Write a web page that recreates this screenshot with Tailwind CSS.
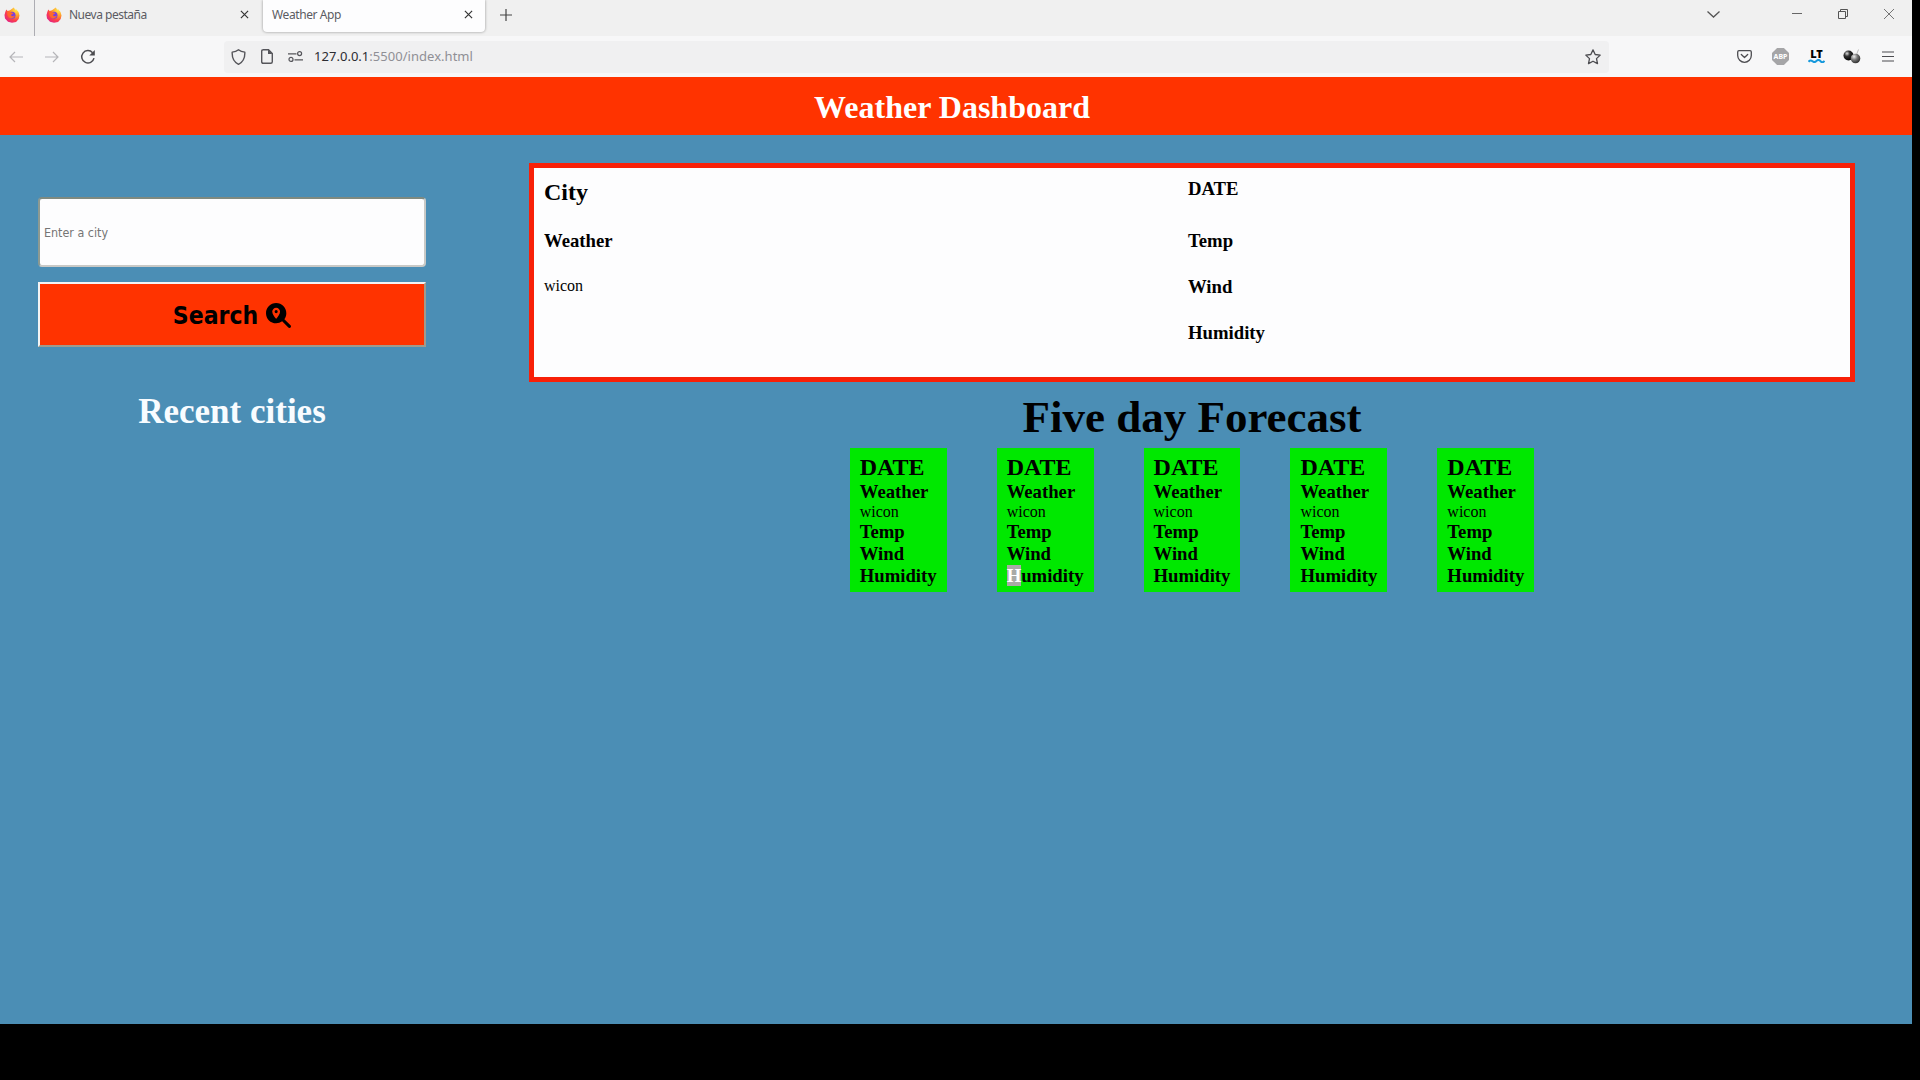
<!DOCTYPE html>
<html lang="es">
<head>
<meta charset="utf-8">
<title>Weather App</title>
<script src="https://cdn.jsdelivr.net/npm/@tailwindcss/browser@4"></script>
</head>
<body class="h-[1080px] w-[1920px] overflow-hidden bg-black">
<svg class="absolute h-0 w-0">
  <defs>
    <radialGradient id="flame" cx=".8" cy=".15" r="1"><stop offset="0" stop-color="#fff04a"/><stop offset=".4" stop-color="#ff9a2a"/><stop offset=".7" stop-color="#fb3f4c"/><stop offset="1" stop-color="#e0208a"/></radialGradient>
    <radialGradient id="dark" cx=".35" cy=".3" r=".7"><stop offset="0" stop-color="#ddd"/><stop offset=".4" stop-color="#333"/><stop offset="1" stop-color="#000"/></radialGradient>
    <radialGradient id="mid" cx=".35" cy=".3" r=".7"><stop offset="0" stop-color="#eee"/><stop offset=".5" stop-color="#777"/><stop offset="1" stop-color="#333"/></radialGradient>
    <symbol id="fox" viewBox="0 0 16 16">
      <path d="M1.200 5.200 2.300 2.600l1.300 1.500L6 3.200 9.800.6l1.400 2.200 1-.5 2.300 2.800 1 3.400-.8 3.600-2.600 2.800L8 15.800l-4-1L1 11.500.500 8z" fill="url(#flame)"/>
      <circle cx="8" cy="8.300" r="3.500" fill="#7a3fe0"/>
      <path d="M3.600 4.300c2-.3 3 .6 3.800 1.300l2 .3c-.4 1.200-2 1-2.400 2 .2 1.500 2.400 2 3.800.7-.4 2.200-2.700 3.300-4.700 2.600C3.600 10.300 3 7 3.600 4.300z" fill="#ff6a2a"/>
    </symbol>
  </defs>
</svg>
<div class="flex h-[1024px] w-[1912px] flex-col bg-[#4b8eb5]">
  <!-- Browser chrome -->
  <div class="flex h-[77px] shrink-0 flex-col bg-[#f7f7f8] font-['Noto_Sans','Open_Sans',sans-serif] text-[#5b5b62]">
    <div class="flex h-9 bg-[#f0f0f0]">
      <div class="flex h-[29px] w-[34px] items-center pl-1"><svg class="size-4"><use href="#fox"/></svg></div>
      <div class="h-9 w-px bg-[#adadb3]"></div>
      <div class="flex h-[29px] w-[228px] items-center pl-[11px] pr-[14px]">
        <svg class="size-4"><use href="#fox"/></svg>
        <span class="ml-[7px] flex-1 whitespace-nowrap text-[12px] tracking-[-0.5px]">Nueva pestaña</span>
        <svg class="size-[9px]" viewBox="0 0 10 10" fill="none" stroke="#333" stroke-width="1.300"><path d="M1 1l8 8M9 1L1 9"/></svg>
      </div>
      <div class="flex h-8 w-[222px] items-center rounded-b bg-[#fdfdfe] pb-[3px] pl-[9px] pr-3 shadow-[0_0_3px_rgba(0,0,0,0.4)]">
        <span class="flex-1 whitespace-nowrap text-[12px] tracking-[-0.4px]">Weather App</span>
        <svg class="size-[9px]" viewBox="0 0 10 10" fill="none" stroke="#333" stroke-width="1.300"><path d="M1 1l8 8M9 1L1 9"/></svg>
      </div>
      <div class="flex h-[29px] flex-1 items-center pl-[15px]">
        <svg class="size-3" viewBox="0 0 12 12" fill="none" stroke="#444" stroke-width="1.200"><path d="M6 0v12M0 6h12"/></svg>
      </div>
      <div class="flex h-7 items-center pr-[18px]">
        <svg class="mr-[72px] h-[7px] w-[13px]" viewBox="0 0 13 7" fill="none" stroke="#555" stroke-width="1.300"><path d="M.5.5l6 5.500 6-5.500"/></svg>
        <svg class="mr-[36px] h-[10px] w-[10px]" viewBox="0 0 10 10" stroke="#666"><path d="M0 4.500h10"/></svg>
        <svg class="mr-[36px] h-[10px] w-[10px]" viewBox="0 0 10 10" fill="none" stroke="#555"><path d="M.5 2.500h7v7h-7zM2.500 2.500v-2h7v7h-2"/></svg>
        <svg class="h-[10px] w-[10px]" viewBox="0 0 10 10" stroke="#666" stroke-width=".9"><path d="M0 0l10 10M10 0L0 10"/></svg>
      </div>
    </div>
    <div class="flex h-[41px] items-center">
      <svg class="ml-[9px] h-3 w-[14px]" viewBox="0 0 14 12" fill="none" stroke="#b5b5b9" stroke-width="1.200"><path d="M14 6H1M6 1L1 6l5 5"/></svg>
      <svg class="ml-[22px] h-3 w-[14px]" viewBox="0 0 14 12" fill="none" stroke="#b5b5b9" stroke-width="1.200"><path d="M0 6h13M8 1l5 5-5 5"/></svg>
      <svg class="ml-[21px] size-4" viewBox="0 0 16 16"><path d="M12.600 3.700A6.200 6.200 0 1 0 14 9.200" fill="none" stroke="#4c4c50" stroke-width="1.500"/><path d="M14.800 1v5.500H9.300z" fill="#4c4c50"/></svg>
      <div class="ml-[128px] flex h-8 w-[1385px] items-center rounded bg-[#f0f0f1]">
        <svg class="ml-[7px] h-4 w-[15px]" viewBox="0 0 15 16" fill="none" stroke="#55555a" stroke-width="1.400" stroke-linejoin="round"><path d="M7.500.8c2 1.600 4 2.100 6.300 2.300.3 5.600-1.200 9.800-6.300 12.200C2.400 12.900.9 8.700 1.200 3.100 3.500 2.900 5.500 2.400 7.500.8z"/></svg>
        <svg class="ml-[15px] h-[15px] w-3" viewBox="0 0 12 15"><path d="M2 .7h5.500l3.800 3.800v8.300q0 1.500-1.500 1.500H2.200q-1.500 0-1.500-1.500V2.200Q.7.7 2.200.7z" fill="none" stroke="#55555a" stroke-width="1.400"/><path d="M7 .5v4.500h4.500z" fill="#55555a"/></svg>
        <svg class="ml-[15px] h-[11px] w-[15px]" viewBox="0 0 15 11" fill="none" stroke="#55555a" stroke-width="1.200"><path d="M0 2.800h8.500M6.500 8.800H15"/><circle cx="11.600" cy="2.600" r="2"/><circle cx="3" cy="8.400" r="2"/></svg>
        <span class="ml-[11px] flex-1 whitespace-nowrap pt-px text-[13px] tracking-[0.03px] text-[#8f8f95]"><span class="text-[#2c2c32]">127.0.0.1</span>:5500/index.html</span>
        <svg class="mr-2 size-4" viewBox="0 0 16 16" fill="none" stroke="#4c4c50" stroke-width="1.300" stroke-linejoin="round"><path d="M8 .9l2.200 4.600 5 .6-3.700 3.500 1 5L8 12.200l-4.500 2.400 1-5L.8 6.100l5-.6z"/></svg>
      </div>
      <div class="ml-[128px] flex items-center">
        <svg class="h-[13px] w-[15px]" viewBox="0 0 15 13" fill="none" stroke="#4c4c50" stroke-width="1.300" stroke-linecap="round" stroke-linejoin="round"><path d="M2 .7h11q1.300 0 1.300 1.300v3.500a6.800 6.800 0 0 1-13.600 0V2Q.7.7 2 .7zM4.300 4.500l3.200 3 3.200-3"/></svg>
        <div class="ml-5 flex size-[17px] items-center justify-center bg-[#a5a5a7] text-[7px] font-bold leading-none text-white [clip-path:polygon(30%_0,70%_0,100%_30%,100%_70%,70%_100%,30%_100%,0_70%,0_30%)]">ABP</div>
        <div class="ml-[19px] flex h-[13px] w-[17px] flex-col items-center justify-between">
          <span class="h-[8px] font-['Noto_Sans',sans-serif] text-[11px] font-black leading-[8px] text-black">LT</span>
          <svg class="h-1 w-[17px]" viewBox="0 0 17 4" fill="none" stroke="#1598dc" stroke-width="2"><path d="M.5 2.800q2-2.200 4-.5t4-.4 4 .3 4-.4"/></svg>
        </div>
        <svg class="ml-[18px] h-4 w-[18px]" viewBox="0 0 18 16"><path d="M13 7L15.500.5" stroke="#bbb"/><circle cx="5.500" cy="6.500" r="5" fill="url(#dark)"/><circle cx="12.500" cy="9.500" r="4.800" fill="url(#mid)"/></svg>
        <svg class="ml-[21px] h-[11px] w-3" viewBox="0 0 12 11" stroke="#4c4c50" stroke-width="1.200"><path d="M0 1h12M0 5.500h12M0 10h12"/></svg>
      </div>
    </div>
  </div>

  <!-- Page -->
  <div class="flex flex-1 flex-col font-['Liberation_Serif',serif] text-base text-black">
    <header class="flex h-[58px] items-center justify-center bg-[#ff3300] pr-2 pt-px">
      <h1 class="text-[32px] font-bold leading-[36px] text-white">Weather Dashboard</h1>
    </header>
    <div class="flex flex-1">
      <aside class="ml-[38px] flex w-[388px] flex-col pt-[62px]">
        <div class="flex h-[70px] items-center rounded border-2 border-b-[#c9c9c6] border-l-[#8d9a92] border-r-[#c9c9c6] border-t-[#7f8a80] bg-[#fdfdfe] pl-1 pt-[2px] font-['DejaVu_Sans_Condensed','DejaVu_Sans',sans-serif] text-[12.400px] text-[#757575] [font-stretch:condensed]">Enter a city</div>
        <div class="mt-[15px] flex h-[65px] items-center justify-center border-2 border-b-[#a09a8c] border-l-[#f4f4f4] border-r-[#a09a8c] border-t-[#f4f4f4] bg-[#ff3300] pt-[2px]">
          <span class="font-['DejaVu_Sans_Condensed','DejaVu_Sans',sans-serif] text-[24.500px] font-bold leading-7 [font-stretch:condensed]">Search</span>
          <svg class="ml-2 size-[25px]" viewBox="0 0 512 512"><path fill-rule="evenodd" d="M416 208c0 45.900-14.900 88.300-40 122.700L502.600 457.400c12.500 12.500 12.500 32.800 0 45.300s-32.800 12.500-45.300 0L330.700 376c-34.400 25.200-76.800 40-122.700 40C93.100 416 0 322.900 0 208S93.100 0 208 0S416 93.100 416 208zM288 176c0-44.200-35.800-80-80-80s-80 35.800-80 80c0 48.800 46.500 111.600 68.600 138.600c6 7.300 16.800 7.300 22.700 0c22.100-27 68.600-89.800 68.600-138.600zm-112 0a32 32 0 1 1 64 0 32 32 0 1 1-64 0z"/></svg>
        </div>
        <h2 class="mt-[45px] text-center text-[35px] font-bold leading-10 text-[#f8fcff]">Recent cities</h2>
      </aside>
      <main class="ml-[103px] flex w-[1326px] flex-col pt-7">
        <section class="flex h-[219px] border-5 border-[#f82008] bg-[#fdfdfe] pl-[10px]">
          <div class="flex w-[644px] flex-col pt-[11px]">
            <h2 class="text-2xl font-bold leading-[27px]">City</h2>
            <h3 class="mt-[24px] text-[18.720px] font-bold leading-[22px]">Weather</h3>
            <p class="mt-[25px] leading-[18px]">wicon</p>
          </div>
          <div class="flex flex-col pt-[10px] text-[18.720px] font-bold leading-[22px]">
            <h3>DATE</h3>
            <h3 class="mt-[30px]">Temp</h3>
            <h3 class="mt-6">Wind</h3>
            <h3 class="mt-6">Humidity</h3>
          </div>
        </section>
        <h2 class="mt-[9px] text-center text-[45px] font-bold leading-[52px]">Five day Forecast</h2>
        <section class="mt-[5px] flex justify-center gap-[50px] text-[18.720px] font-bold leading-[22px] [&>div]:h-[144px] [&>div]:bg-[#00e800] [&>div]:px-[10px] [&>div]:pt-[6px]">
          <div><h2 class="text-2xl leading-[27px]">DATE</h2><h3>Weather</h3><p class="text-base font-normal leading-[18px]">wicon</p><h3>Temp</h3><h3>Wind</h3><h3>Humidity</h3></div>
          <div><h2 class="text-2xl leading-[27px]">DATE</h2><h3>Weather</h3><p class="text-base font-normal leading-[18px]">wicon</p><h3>Temp</h3><h3>Wind</h3><h3><span class="bg-[#a9aaa6] text-white">H</span>umidity</h3></div>
          <div><h2 class="text-2xl leading-[27px]">DATE</h2><h3>Weather</h3><p class="text-base font-normal leading-[18px]">wicon</p><h3>Temp</h3><h3>Wind</h3><h3>Humidity</h3></div>
          <div><h2 class="text-2xl leading-[27px]">DATE</h2><h3>Weather</h3><p class="text-base font-normal leading-[18px]">wicon</p><h3>Temp</h3><h3>Wind</h3><h3>Humidity</h3></div>
          <div><h2 class="text-2xl leading-[27px]">DATE</h2><h3>Weather</h3><p class="text-base font-normal leading-[18px]">wicon</p><h3>Temp</h3><h3>Wind</h3><h3>Humidity</h3></div>
        </section>
      </main>
    </div>
  </div>
</div>
</body>
</html>
